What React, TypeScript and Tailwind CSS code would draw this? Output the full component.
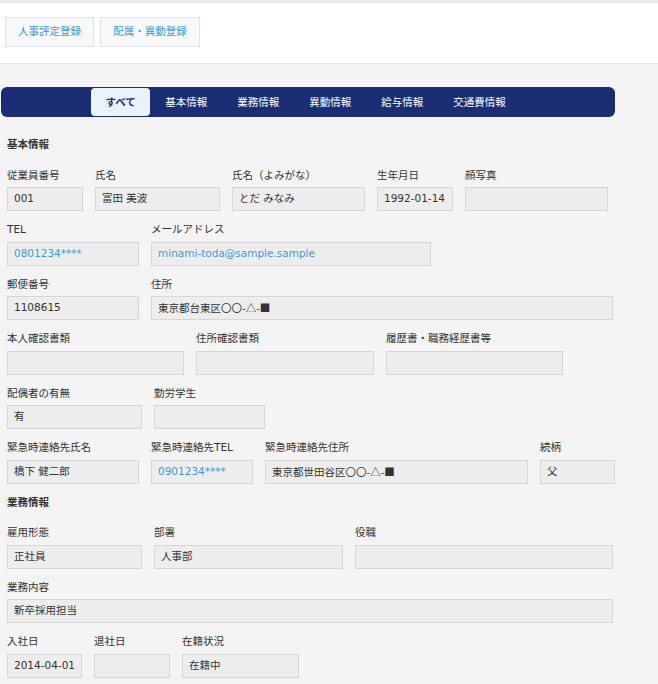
import React from 'react';

// Employee detail screen (read-only)

type FieldProps = {
  label: string;
  value?: string;
  w: string; // width class, written out in full at the call site
  blue?: boolean;
  cjk?: boolean; // full-width symbols (〇△■) should come from the CJK font
};

const Field: React.FC<FieldProps> = ({ label, value, w, blue, cjk }) => (
  <div className={`flex flex-col ${w}`}>
    <div className="text-[10.5px] leading-[16px] mb-[4.5px] text-[#333] whitespace-nowrap">{label}</div>
    <div
      className={`h-[24px] border border-[#d6d6d6] bg-[#ededed] px-[6px] text-[10.5px] leading-[21px] whitespace-nowrap overflow-hidden ${
        blue ? 'text-[#3d9ae0]' : 'text-[#333]'
      } ${cjk ? "font-['Noto_Sans_CJK_JP',sans-serif]" : ''}`}
    >
      {value}
    </div>
  </div>
);

const Row: React.FC<{ children: React.ReactNode }> = ({ children }) => (
  <div className="flex gap-[12px] mb-[10px]">{children}</div>
);

const SectionTitle: React.FC<{ children: React.ReactNode }> = ({ children }) => (
  <div className="text-[10.5px] leading-[16px] font-bold text-[#333] mb-[14.5px]">{children}</div>
);

const tabs = ['すべて', '基本情報', '業務情報', '異動情報', '給与情報', '交通費情報'];

export default function App() {
  return (
    <div className="min-h-screen bg-[#f4f4f4] font-['DejaVu_Sans','Noto_Sans_CJK_JP',sans-serif]">
      {/* header with action buttons */}
      <div className="bg-white border-t-[3px] border-t-[#e9e9e9] border-b border-b-[#e2e2e2] pt-[14px] pb-[16px] pl-[5px] flex gap-[6px]">
        <button className="h-[30px] w-[89px] border border-[#e1e5e8] bg-[#f7f9fb] text-[10.5px] text-[#3d9ae0]">
          人事評定登録
        </button>
        <button className="h-[30px] w-[100px] border border-[#e1e5e8] bg-[#f7f9fb] text-[10.5px] text-[#3d9ae0]">
          配属・異動登録
        </button>
      </div>

      <div className="pt-[23px] pl-[1px] w-[615px] pb-[20px]">
        {/* tab bar */}
        <div className="h-[30px] rounded-[6px] bg-[#1b2e73] flex items-center pl-[90px]">
          {tabs.map((t, i) =>
            i === 0 ? (
              <div
                key={t}
                className="h-[28px] px-[14.5px] rounded-[4px] bg-[#e9f2fd] text-[#1b2e73] font-bold text-[10.5px] leading-[28px]"
              >
                {t}
              </div>
            ) : (
              <div key={t} className="h-[28px] px-[15px] text-white text-[10.5px] leading-[28px]">
                {t}
              </div>
            )
          )}
        </div>

        <div className="pl-[6px] pt-[19px]">
          <SectionTitle>基本情報</SectionTitle>
          <Row>
            <Field label="従業員番号" value="001" w="w-[76px]" />
            <Field label="氏名" value="富田 美波" w="w-[125px]" />
            <Field label="氏名（よみがな）" value="とだ みなみ" w="w-[133px]" />
            <Field label="生年月日" value="1992-01-14" w="w-[76px]" />
            <Field label="顔写真" w="w-[143px]" />
          </Row>
          <Row>
            <Field label="TEL" value="0801234****" w="w-[132px]" blue />
            <Field label="メールアドレス" value="minami-toda@sample.sample" w="w-[280px]" blue />
          </Row>
          <Row>
            <Field label="郵便番号" value="1108615" w="w-[132px]" />
            <Field label="住所" value="東京都台東区〇〇-△-■" w="w-[462px]" cjk />
          </Row>
          <Row>
            <Field label="本人確認書類" w="w-[177px]" />
            <Field label="住所確認書類" w="w-[178px]" />
            <Field label="履歴書・職務経歴書等" w="w-[177px]" />
          </Row>
          <Row>
            <Field label="配偶者の有無" value="有" w="w-[135px]" />
            <Field label="勤労学生" w="w-[111px]" />
          </Row>
          <Row>
            <Field label="緊急時連絡先氏名" value="橋下 健二郎" w="w-[132px]" />
            <Field label="緊急時連絡先TEL" value="0901234****" w="w-[102px]" blue />
            <Field label="緊急時連絡先住所" value="東京都世田谷区〇〇-△-■" w="w-[263px]" cjk />
            <Field label="続柄" value="父" w="w-[75px]" />
          </Row>

          <SectionTitle>業務情報</SectionTitle>
          <Row>
            <Field label="雇用形態" value="正社員" w="w-[135px]" />
            <Field label="部署" value="人事部" w="w-[189px]" />
            <Field label="役職" w="w-[258px]" />
          </Row>
          <Row>
            <Field label="業務内容" value="新卒採用担当" w="w-[606px]" />
          </Row>
          <Row>
            <Field label="入社日" value="2014-04-01" w="w-[75px]" />
            <Field label="退社日" w="w-[76px]" />
            <Field label="在籍状況" value="在籍中" w="w-[117px]" />
          </Row>
        </div>
      </div>
    </div>
  );
}
